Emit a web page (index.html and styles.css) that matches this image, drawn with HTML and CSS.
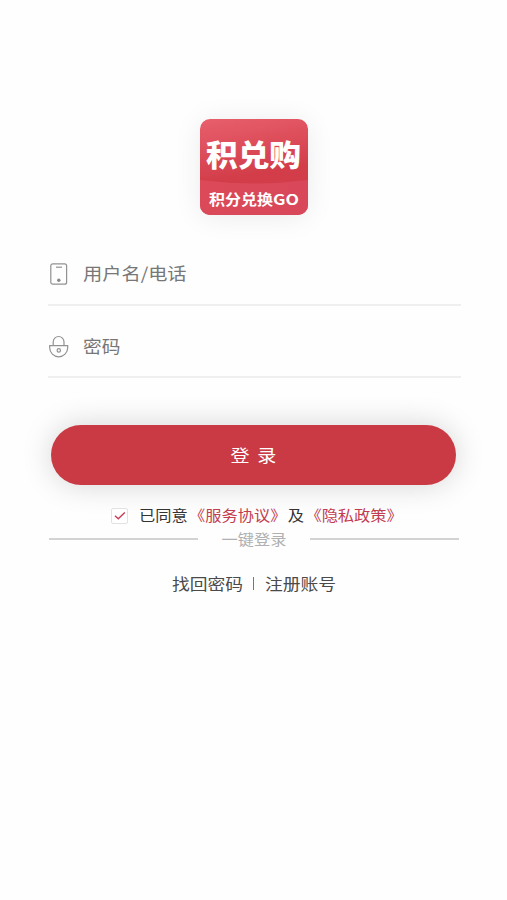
FILE: index.html
```html
<!DOCTYPE html>
<html lang="zh-CN">
<head>
  <meta charset="UTF-8">
  <title>登录</title>
  <link rel="stylesheet" href="styles.css">
</head>
<body>

  <div class="logo">
    <svg width="108" height="96" viewBox="0 0 108 96">
      <defs>
        <linearGradient id="top" x1="0" y1="0" x2="0.2" y2="1">
          <stop offset="0" stop-color="#e85f6c"/>
          <stop offset="0.65" stop-color="#d33d4a"/>
        </linearGradient>
        <linearGradient id="bottom" x1="0" y1="0" x2="1" y2="0.3">
          <stop offset="0" stop-color="#dc4a58"/>
          <stop offset="1" stop-color="#d8485a"/>
        </linearGradient>
        <clipPath id="box"><rect width="108" height="96" rx="10"/></clipPath>
      </defs>
      <g clip-path="url(#box)">
        <rect width="108" height="96" fill="url(#top)"/>
        <path d="M0 61 Q54 68 108 61 V96 H0 Z" fill="url(#bottom)"/>
      </g>
      <text class="logo-name" x="6" y="47" textLength="95" lengthAdjust="spacingAndGlyphs">积兑购</text>
      <text class="logo-sub" x="9" y="86" textLength="64" lengthAdjust="spacingAndGlyphs">积分兑换</text>
      <text class="logo-sub" x="73" y="86" textLength="26" lengthAdjust="spacingAndGlyphs">GO</text>
    </svg>
  </div>

  <form class="login-form">
    <div class="field">
      <svg class="icon" width="20" height="24" viewBox="0 0 20 24">
        <rect x="1.8" y="1.8" width="15.8" height="20.4" rx="2"/>
        <path d="M7 5.2h6"/>
        <circle class="dot" cx="9.8" cy="18.2" r="1.7"/>
      </svg>
      <input type="text" placeholder="用户名/电话">
    </div>
    <div class="field">
      <svg class="icon" width="20" height="24" viewBox="0 0 20 24">
        <path d="M4.2 10.4V6.9a5.4 5.4 0 0 1 10.8 0v3.5"/>
        <path d="M.7 10.6h18v2.2a9 9 0 0 1-18 0z"/>
        <circle cx="9.8" cy="15.4" r="1.7"/>
      </svg>
      <input type="password" placeholder="密码">
    </div>

    <button type="button" class="login-btn"><span>登 录</span></button>
  </form>

  <div class="agree">
    <span class="check">
      <svg width="12" height="10" viewBox="0 0 12 10"><path d="M1 4.8l3.3 3L10.8 1.6"/></svg>
    </span>
    <span class="agree-text">已同意<a>《服务协议》</a>及<a>《隐私政策》</a></span>
  </div>

  <div class="divider"><i></i><span>一键登录</span><i></i></div>

  <div class="links">
    <span>找回密码</span><b></b><span>注册账号</span>
  </div>

</body>
</html>
```
FILE: styles.css
```css
body {
  margin: 0;
  background-color: #fefefe;
  font-family: "Noto Sans CJK SC", sans-serif;
  color: #333;
}

.logo {
  width: 108px;
  height: 96px;
  margin: 119px 0 0 200px;
  border-radius: 10px;
  box-shadow: 0 2px 28px rgba(0, 0, 0, 0.08);
}

.logo svg {
  display: block;
}

.logo-name {
  font-size: 30px;
  font-weight: 900;
  fill: #fff;
}

.logo-sub {
  font-size: 14.5px;
  font-weight: 700;
  fill: #fff;
}

.login-form {
  margin: 28px 46px 0 48px;
}

.field {
  display: flex;
  align-items: center;
  box-sizing: border-box;
  height: 72px;
  padding: 0 0 0 1px;
  border-bottom: 2px solid #efefef;
}

.field:first-child {
  height: 63px;
  padding-top: 1px;
}

.field:nth-child(2) {
  padding-top: 11px;
}

.icon {
  flex: none;
  fill: none;
  stroke: #929292;
  stroke-width: 1.2;
}

.icon .dot {
  fill: #888;
  stroke: none;
}

.field input {
  width: 300px;
  margin: 0 0 3px 14px;
  padding: 0;
  border: 0;
  outline: none;
  background: none;
  font: 17px "Noto Sans CJK SC", sans-serif;
  transform: scaleX(1.13);
  transform-origin: left;
}

.field input::placeholder {
  color: #777;
}

.field:nth-child(2) input {
  transform: scaleX(1.1);
}

.login-btn {
  display: block;
  width: 405px;
  height: 60px;
  margin: 47px 0 0 3px;
  padding: 0 0 2px;
  border: 0;
  border-radius: 30px;
  background-color: #c93a44;
  box-shadow: 0 0 30px rgba(0, 0, 0, 0.17);
  color: #fff;
  font: 17px "Noto Sans CJK SC", sans-serif;
}

.login-btn span {
  display: inline-block;
  word-spacing: 3px;
  transform: scaleX(1.12);
}

.agree {
  display: flex;
  align-items: center;
  height: 24px;
  margin: 18px 0 0 111px;
}

.check {
  display: flex;
  align-items: center;
  justify-content: center;
  box-sizing: border-box;
  width: 17px;
  height: 16px;
  margin-top: 1px;
  border: 1px solid #e2e2e2;
  border-radius: 2px;
  background-color: #fff;
}

.check svg {
  fill: none;
  stroke: #c93a54;
  stroke-width: 1.4;
}

.agree-text {
  margin-left: 11px;
  font-size: 14.5px;
  line-height: 24px;
  white-space: nowrap;
  transform: scaleX(1.12);
  transform-origin: left;
}

.agree-text a {
  margin: 0 1.2px;
  color: #c23c50;
}

.divider {
  display: flex;
  align-items: center;
  justify-content: space-between;
  height: 22px;
  margin: 1px 48px 0 49px;
}

.divider i {
  width: 149px;
  height: 2px;
  background-color: #d3d3d3;
}

.divider span {
  font-size: 14.5px;
  line-height: 22px;
  color: #b0b0b0;
  transform: scaleX(1.12);
}

.links {
  display: flex;
  align-items: center;
  height: 24px;
  margin: 21px 0 0 172px;
  font-size: 16px;
  line-height: 24px;
  color: #4a4a4a;
}

.links span {
  width: 71px;
  white-space: nowrap;
  transform: scaleX(1.11);
  transform-origin: left;
}

.links b {
  width: 1px;
  height: 13px;
  margin: 0 11px 0 10px;
  background-color: #777;
}
```
